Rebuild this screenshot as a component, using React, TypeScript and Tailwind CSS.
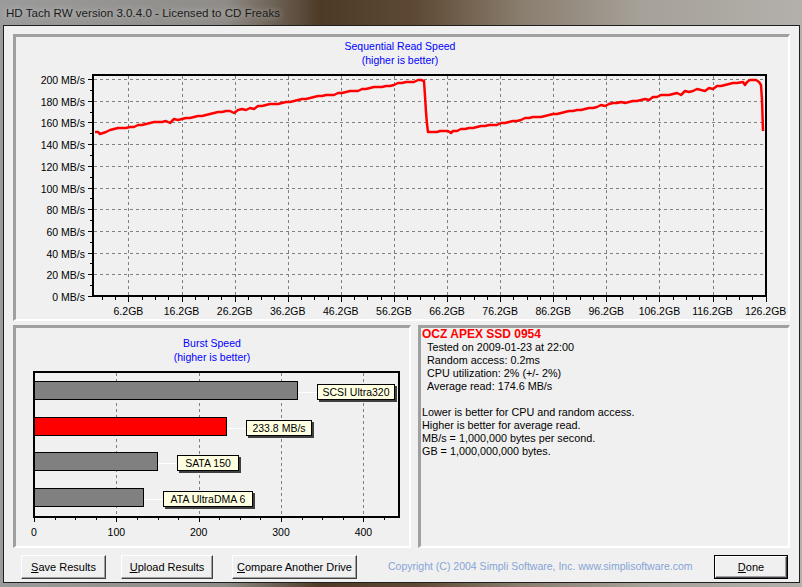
import type { ReactNode } from "react"

// y position of a MB/s value on the sequential chart
const yOf = (v: number) => 296 - v * 1.085
const gbX = (gb: number) => 95.5 + gb * 5.31
const burstX = (v: number) => 34 + v * 0.8235

const yValues = [0, 20, 40, 60, 80, 100, 120, 140, 160, 180, 200]
const gbLabels = [6.2, 16.2, 26.2, 36.2, 46.2, 56.2, 66.2, 76.2, 86.2, 96.2, 106.2, 116.2, 126.2]

function seqLine(): string {
  let s = 11
  const rnd = () => {
    s = (s * 9301 + 49297) % 233280
    return s / 233280
  }
  const pts: number[][] = [[95, 132], [98, 132], [100, 134], [103, 133], [106, 132]]
  for (let x = 110; x <= 418; x += 4) {
    const t = (x - 95) / (422 - 95)
    let y = 132.5 - t * 52.5 + (rnd() - 0.5) * 1.4
    if (rnd() < 0.07) y += 2
    pts.push([x, Math.round(y)])
  }
  pts.push([421, 80], [424, 81], [425, 96], [426, 112], [427, 124], [428, 132], [437, 132], [440, 131], [448, 131], [451, 133], [453, 131])
  for (let x = 457; x <= 740; x += 4) {
    const t = (x - 453) / (750 - 453)
    let y = 131 - t * 50 + (rnd() - 0.5) * 1.4
    if (rnd() < 0.07) y += 2
    pts.push([x, Math.round(y)])
  }
  pts.push([743, 82], [745, 85], [747, 82], [750, 80], [756, 80], [759, 82], [761, 85], [762, 100], [763, 131])
  return pts.map((p) => p.join(",")).join(" ")
}

function SeqChart() {
  const minorX: number[] = []
  for (let k = -2; k <= 48; k++) {
    const x = gbX(6.2) + k * 13.275
    if (x >= 94 && x <= 766) minorX.push(x)
  }
  return (
    <svg width={772} height={282} viewBox="16 37 772 282" className="block">
      <text x={400} y={50} textAnchor="middle" fontSize={10.5} fill="#0000ff">
        Sequential Read Speed
      </text>
      <text x={400} y={64} textAnchor="middle" fontSize={10.5} fill="#0000ff">
        (higher is better)
      </text>

      {/* grid */}
      {yValues.slice(1).map((v) => (
        <line key={v} x1={94} x2={765} y1={Math.round(yOf(v)) + 0.5} y2={Math.round(yOf(v)) + 0.5} stroke="#808080" strokeDasharray="3 3" />
      ))}
      {gbLabels.map((g) => (
        <line key={g} x1={Math.round(gbX(g)) + 0.5} x2={Math.round(gbX(g)) + 0.5} y1={76} y2={295} stroke="#808080" strokeDasharray="3 3" />
      ))}

      {/* y ticks + labels */}
      {yValues.map((v) => {
        const y = Math.round(yOf(v)) + 0.5
        return (
          <g key={v}>
            <line x1={88} x2={93} y1={y} y2={y} stroke="#000" />
            {v < 200 && <line x1={90} x2={93} y1={Math.round(yOf(v + 10)) + 0.5} y2={Math.round(yOf(v + 10)) + 0.5} stroke="#000" />}
            <text x={85} y={y + 4} textAnchor="end" fontSize={10.5} fill="#000">
              {v} MB/s
            </text>
          </g>
        )
      })}

      {/* x ticks + labels */}
      {minorX.map((x, i) => (
        <line key={i} x1={Math.round(x) + 0.5} x2={Math.round(x) + 0.5} y1={297} y2={300} stroke="#000" />
      ))}
      {gbLabels.map((g) => (
        <g key={g}>
          <line x1={Math.round(gbX(g)) + 0.5} x2={Math.round(gbX(g)) + 0.5} y1={297} y2={302} stroke="#000" />
          <text x={gbX(g)} y={315} textAnchor="middle" fontSize={10.5} fill="#000">
            {g}GB
          </text>
        </g>
      ))}

      <rect x={93} y={75} width={673} height={221} fill="none" stroke="#000" strokeWidth={2} />

      <polyline points={seqLine()} fill="none" stroke="#ff0000" strokeWidth={2.5} strokeLinejoin="round" />
    </svg>
  )
}

const bars = [
  { v: 320, y: 381, color: "#808080", label: "SCSI Ultra320", lx: 317, lw: 78 },
  { v: 233.8, y: 417, color: "#ff0000", label: "233.8 MB/s", lx: 246, lw: 66 },
  { v: 150, y: 452, color: "#808080", label: "SATA 150", lx: 177, lw: 62 },
  { v: 133, y: 488, color: "#808080", label: "ATA UltraDMA 6", lx: 163, lw: 90 },
]

function BurstChart() {
  const ticks: number[] = []
  for (let v = 0; v <= 440; v += 25) ticks.push(v)
  return (
    <svg width={393} height={218} viewBox="16 328 393 218" className="block">
      <text x={212} y={347} textAnchor="middle" fontSize={10.5} fill="#0000ff">
        Burst Speed
      </text>
      <text x={212} y={361} textAnchor="middle" fontSize={10.5} fill="#0000ff">
        (higher is better)
      </text>

      {[100, 200, 300, 400].map((v) => (
        <line key={v} x1={Math.round(burstX(v)) + 0.5} x2={Math.round(burstX(v)) + 0.5} y1={373} y2={516} stroke="#808080" strokeDasharray="3 3" />
      ))}

      {ticks.map((v) => (
        <line key={v} x1={Math.round(burstX(v)) + 0.5} x2={Math.round(burstX(v)) + 0.5} y1={518} y2={v % 100 === 0 ? 522 : 520} stroke="#000" />
      ))}
      {[0, 100, 200, 300, 400].map((v) => (
        <text key={v} x={burstX(v)} y={536} textAnchor="middle" fontSize={10.5} fill="#000">
          {v}
        </text>
      ))}

      {bars.map((b) => {
        const end = Math.round(burstX(b.v))
        const ly = b.y + 3
        const cy = ly + 7.5
        return (
          <g key={b.label}>
            <rect x={34.5} y={b.y + 0.5} width={end - 35} height={18} fill={b.color} stroke="#000" />
            <line x1={end} x2={b.lx} y1={Math.round(cy) + 0.5} y2={Math.round(cy) + 0.5} stroke="#fff" />
            <rect x={b.lx + 2} y={ly + 2} width={b.lw} height={16} fill="#404040" />
            <rect x={b.lx + 0.5} y={ly + 0.5} width={b.lw - 1} height={15} fill="#ffffe1" stroke="#000" />
            <text x={b.lx + b.lw / 2} y={ly + 12} textAnchor="middle" fontSize={10.5} fill="#000">
              {b.label}
            </text>
          </g>
        )
      })}

      <rect x={34} y={372} width={365} height={145} fill="none" stroke="#000" strokeWidth={2} />
    </svg>
  )
}

function Btn({ w, children, isDefault }: { w: string; children: ReactNode; isDefault?: boolean }) {
  const face = (
    <div className="h-full w-full flex items-center justify-center text-[11px] text-black bg-[#f0f0f0] border border-t-white border-l-white border-r-[#404040] border-b-[#404040] shadow-[inset_-1px_-1px_0_#a0a0a0]">
      <span>{children}</span>
    </div>
  )
  if (isDefault) {
    return <div className={`h-[24px] ${w} border border-black`}>{face}</div>
  }
  return <div className={`h-[24px] ${w}`}>{face}</div>
}

export default function App() {
  return (
    <div className="w-[802px] h-[587px] flex flex-col overflow-hidden font-['Liberation_Sans',Arial,sans-serif] bg-[linear-gradient(90deg,#9b9b9b_0%,#8f8c88_28%,#4d3a26_40%,#5e4a34_52%,#8a7e6e_65%,#a6a199_80%,#b3b0ab_100%)]">
      {/* title bar */}
      <div className="h-[25px] shrink-0 pl-[6px] pt-[4px] text-[11.6px] text-[#1a1a1a] [text-shadow:0_0_6px_rgba(255,255,255,0.6)]">
        HD Tach RW version 3.0.4.0 - Licensed to CD Freaks
      </div>

      {/* client area */}
      <div className="ml-[3px] mr-[2px] h-[558px] shrink-0 border border-[#1f1f1f] bg-[#f0f0f0] flex flex-col pt-[8px] pl-[9px] pr-[8px]">
        <div className="h-[287px] w-[777px] border-t-[3px] border-l-[3px] border-r-2 border-b-2 border-t-[#a0a0a0] border-l-[#a0a0a0] border-r-white border-b-white">
          <SeqChart />
        </div>

        <div className="mt-[4px] h-[223px] flex gap-[7px]">
          <div className="w-[398px] h-full border-t-[3px] border-l-[3px] border-r-2 border-b-2 border-t-[#a0a0a0] border-l-[#a0a0a0] border-r-white border-b-white">
            <BurstChart />
          </div>
          <div className="w-[372px] h-full border-t-[3px] border-l-[3px] border-r-2 border-b-2 border-t-[#a0a0a0] border-l-[#a0a0a0] border-r-white border-b-white pl-[1px] text-[10.8px] leading-[13px] text-black">
            <div className="text-[12px] font-bold text-[#ff0000]">OCZ APEX SSD 0954</div>
            <div className="pl-[5px]">Tested on 2009-01-23 at 22:00</div>
            <div className="pl-[5px]">Random access: 0.2ms</div>
            <div className="pl-[5px]">CPU utilization: 2% (+/- 2%)</div>
            <div className="pl-[5px]">Average read: 174.6 MB/s</div>
            <div className="h-[13px]" />
            <div>Lower is better for CPU and random access.</div>
            <div>Higher is better for average read.</div>
            <div>MB/s = 1,000,000 bytes per second.</div>
            <div>GB = 1,000,000,000 bytes.</div>
          </div>
        </div>

        <div className="mt-[7px] h-[24px] flex items-center -ml-[9px] -mr-[8px]">
          <div className="ml-[17px]">
            <Btn w="w-[85px]">
              <span className="underline">S</span>ave Results
            </Btn>
          </div>
          <div className="ml-[15px]">
            <Btn w="w-[92px]">
              <span className="underline">U</span>pload Results
            </Btn>
          </div>
          <div className="ml-[19px]">
            <Btn w="w-[125px]">
              <span className="underline">C</span>ompare Another Drive
            </Btn>
          </div>
          <div className="ml-[31px] text-[10.5px] text-[#86a4d6] whitespace-nowrap">
            Copyright (C) 2004 Simpli Software, Inc. www.simplisoftware.com
          </div>
          <div className="ml-auto mr-[11px]">
            <Btn w="w-[74px]" isDefault>
              <span className="underline">D</span>one
            </Btn>
          </div>
        </div>
      </div>
    </div>
  )
}
